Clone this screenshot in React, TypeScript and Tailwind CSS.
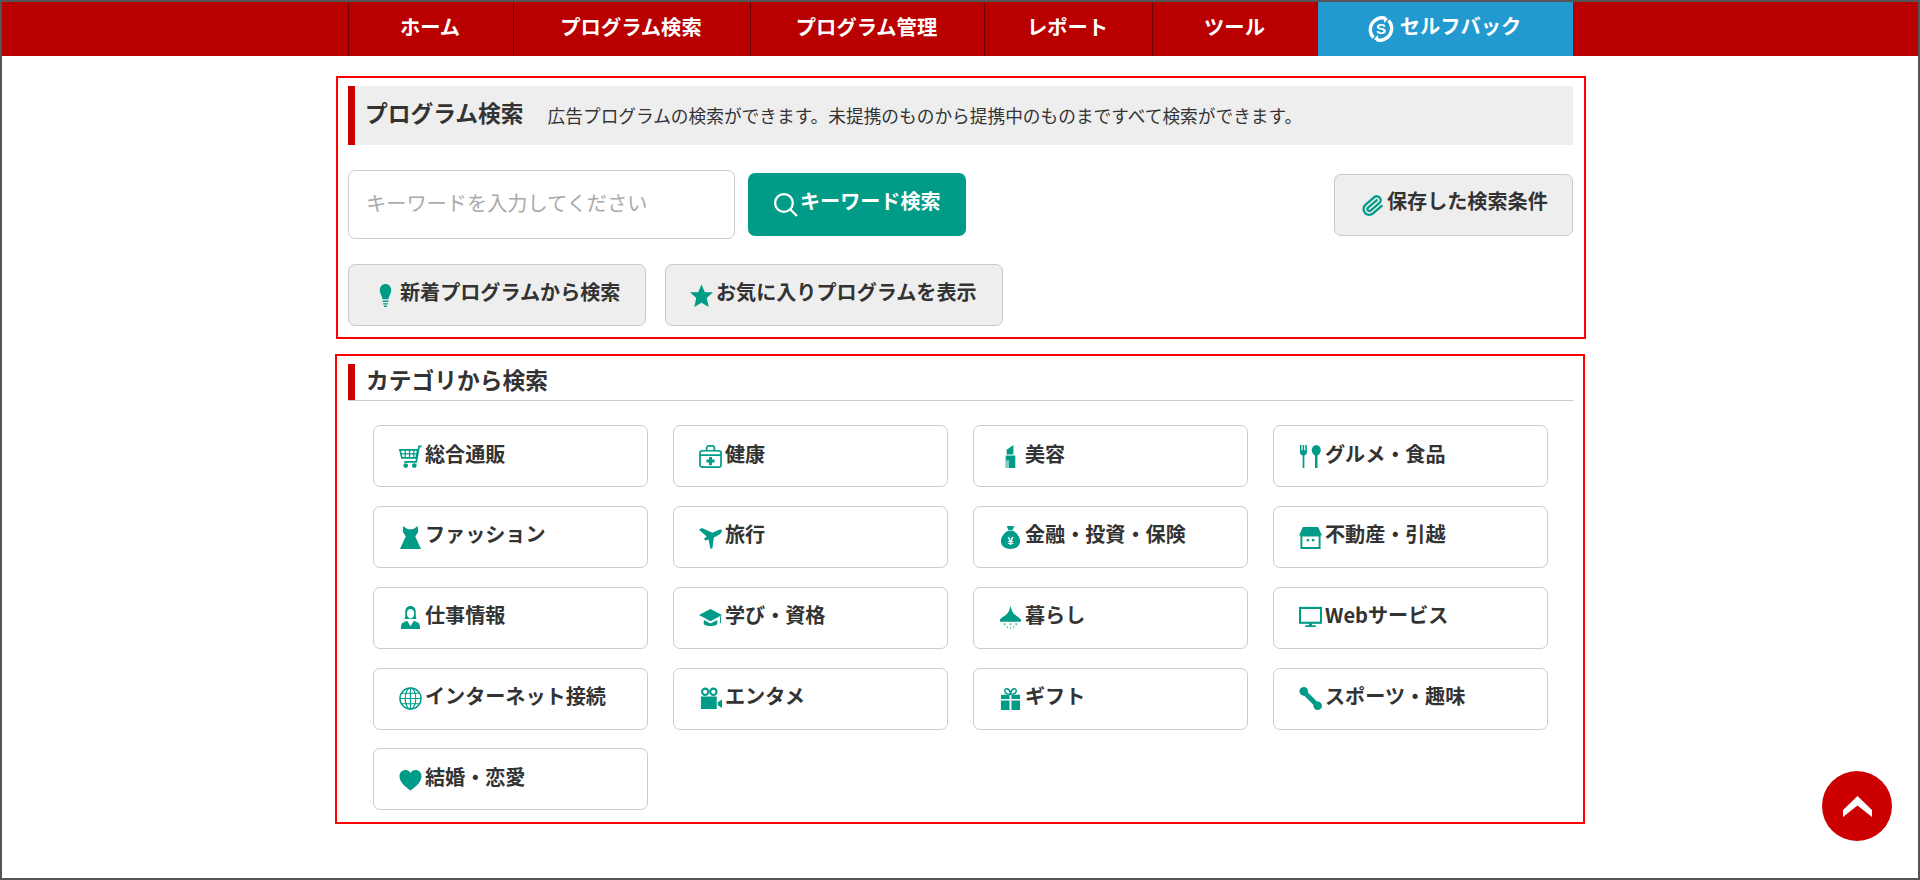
import type { ReactNode } from 'react';
import { Paperclip } from 'lucide-react';

const TEAL = '#009c88';

function Icon({ children }: { children: ReactNode }) {
  return (
    <svg viewBox="0 0 24 24" className="h-[23px] w-[23px] shrink-0" fill={TEAL}>
      {children}
    </svg>
  );
}

const line = { fill: 'none', stroke: TEAL, strokeWidth: 1.8 };

const icons: Record<string, ReactNode> = {
  cart: (
    <g {...line}>
      <path d="M23.5 1.5H21l-3 16H5.5" />
      <path d="M1 5h18.5L18 13.5H3z" />
      <path d="M6.5 5v8.5M11 5v8.5M15.5 5v8.5M2 9.2h17" strokeWidth="1.3" />
      <circle cx="7" cy="21.5" r="1.6" fill={TEAL} />
      <circle cx="16" cy="21.5" r="1.6" fill={TEAL} />
    </g>
  ),
  medical: (
    <g {...line}>
      <rect x="1" y="6" width="22" height="17" rx="2.5" />
      <path d="M8 6V3a2 2 0 0 1 2-2h4a2 2 0 0 1 2 2v3M1 10.5h22" />
      <path d="M10.5 12.5h3v2.7h2.7v3h-2.7V21h-3v-2.8H7.8v-3h2.7z" fill={TEAL} stroke="none" />
    </g>
  ),
  lipstick: (
    <>
      <path d="M8 10V5l7-5v10z" />
      <path d="M7 11h10v13H7z" />
      <path d="M7 16h3.500v8H7z" fill="#7fcdc3" />
    </>
  ),
  food: (
    <>
      <path d="M1 0h1.6v5.5h1.2V0h1.6v5.5h1.2V0h1.6v7.5c0 2-1.3 3-2.6 3.4V24H3.8V10.9C2.3 10.5 1 9.5 1 7.5z" />
      <ellipse cx="18" cy="5.5" rx="4.7" ry="5.5" />
      <path d="M16.7 9h2.6v15h-2.6z" />
    </>
  ),
  dress: <path d="M4.500 0L8 2.500q4 2 8 0L19.500 0l.5 6-3 5 6 13H1l6-13-3-5z" />,
  plane: <path d="M24 5q0-2-3-1l-7 3L3 2 0 4l8 7-3 2.500 2 1.500 3-1 2 10 2-1 1.500-11L21 9q3-2 3-4z" />,
  money: (
    <>
      <path d="M8 0h8l-2 4.5h-4z" />
      <path d="M9.5 5h5c4 2 7.5 6 7.5 11 0 5-4.5 8-10 8S2 21 2 16c0-5 3.500-9 7.500-11z" />
      <text x="12" y="20" textAnchor="middle" fontSize="11" fontWeight="700" fill="#fff" fontFamily="Liberation Sans, sans-serif">¥</text>
    </>
  ),
  shop: (
    <>
      <path d="M4 1h16l4 9H0z" />
      <path d="M2.500 10h19v13h-19z" fill="none" stroke={TEAL} strokeWidth="2" />
      <path d="M8 13.500h2.500V16H8zM13.500 13.500H16V16h-2.500z" />
    </>
  ),
  person: (
    <>
      <path d="M12 0C8.500 0 6.500 2.500 6.500 6c0 3 .3 5.500-.8 7.500h12.600c-1.100-2-.8-4.500-.8-7.500 0-3.500-2-6-5.500-6z" />
      <ellipse cx="12" cy="8" rx="3.800" ry="5" fill="#fff" />
      <path d="M8.500 15.500L4 17.500c-1.500.7-2 2.500-2 6.500h20c0-4-.5-5.800-2-6.500l-4.500-2L12 21z" />
    </>
  ),
  school: (
    <>
      <path d="M12 3L0 9.500l12 6.500 12-6.500z" />
      <path d="M5 14.500v4.500c2 2.500 12 2.500 14 0v-4.500l-7 3.800zM22 11l1-.5V18h-1z" />
    </>
  ),
  lamp: (
    <>
      <path d="M12 0l1.500 5C15 9 20 11 23 14v2.500H1V14c3-3 8-5 9.500-9z" />
      <path d="M5 18h2v2H5zM11 18h2v2h-2zM17 18h2v2h-2zM8 21h1.500v2H8zM14.500 21H16v2h-1.500zM11.500 22h1v2h-1z" fill="#66c4b8" />
    </>
  ),
  monitor: (
    <>
      <rect x="1" y="2" width="22" height="15.500" fill="none" stroke={TEAL} strokeWidth="2.200" />
      <path d="M10.500 17.500h3V20h-3zM6.500 20h11v2h-11z" />
    </>
  ),
  globe: (
    <g {...line} strokeWidth="1.200">
      <circle cx="12" cy="12" r="11" strokeWidth="1.500" />
      <ellipse cx="12" cy="12" rx="5.500" ry="11" />
      <path d="M12 1v22M1 12h22M2.500 6.500h19M2.500 17.500h19" />
    </g>
  ),
  video: (
    <>
      <circle cx="6.500" cy="5" r="3.300" fill="none" stroke={TEAL} strokeWidth="2.200" />
      <circle cx="15" cy="5" r="3.300" fill="none" stroke={TEAL} strokeWidth="2.200" />
      <path d="M2 10h16.500v13H2zM19.500 16l4.500-3v9l-4.500-3z" />
    </>
  ),
  gift: (
    <>
      <path d="M2 8h9v4.500H2zM13 8h9v4.500h-9zM2 14h9v10H2zM13 14h9v10h-9z" />
      <path d="M12 7.500C9 7.500 6 6.500 6 3.800 6 1 10.500.5 12 6.500c1.500-6 6-5.500 6-2.700 0 2.700-3 3.700-6 3.700z" fill="none" stroke={TEAL} strokeWidth="1.500" />
    </>
  ),
  sports: (
    <>
      <path d="M5.500 5.500l13 13" stroke={TEAL} strokeWidth="5" />
      <circle cx="5" cy="4.500" r="4.500" />
      <circle cx="19.500" cy="19.500" r="4.500" />
    </>
  ),
  heart: <path d="M12 23.500C6 19 .5 14.500.5 8.500.5 4.500 3.500 2 6.800 2 9 2 11 3.200 12 5.200 13 3.200 15 2 17.200 2c3.300 0 6.300 2.500 6.300 6.500 0 6-5.500 10.500-11.500 15z" />,
  bulb: (
    <>
      <path d="M12 0c3.500 0 6 2.800 6 6.500 0 3.500-2.500 6-3 9.500H9c-.5-3.500-3-6-3-9.500C6 2.800 8.500 0 12 0z" />
      <path d="M9 17.200h6v1.600H9zM9.500 20h5v1.500h-5zM10.500 22.500h3V24h-3z" />
    </>
  ),
  star: <path d="M12 .500l3.500 8h8.500l-6.500 6 2 9.500-7.500-4.500L4.500 24l2-9.500L0 8.500h8.500z" />,
};

const categories = [
  ['cart', '総合通販'],
  ['medical', '健康'],
  ['lipstick', '美容'],
  ['food', 'グルメ・食品'],
  ['dress', 'ファッション'],
  ['plane', '旅行'],
  ['money', '金融・投資・保険'],
  ['shop', '不動産・引越'],
  ['person', '仕事情報'],
  ['school', '学び・資格'],
  ['lamp', '暮らし'],
  ['monitor', 'Webサービス'],
  ['globe', 'インターネット接続'],
  ['video', 'エンタメ'],
  ['gift', 'ギフト'],
  ['sports', 'スポーツ・趣味'],
  ['heart', '結婚・恋愛'],
];

const navItems = [
  { label: 'ホーム', w: 'w-[165px]' },
  { label: 'プログラム検索', w: 'w-[237px]' },
  { label: 'プログラム管理', w: 'w-[234px]' },
  { label: 'レポート', w: 'w-[168px]' },
  { label: 'ツール', w: 'w-[166px]' },
];

function GrayButton({ icon, label, className, labelClass = 'pb-[5px]' }: { icon: ReactNode; label: string; className: string; labelClass?: string }) {
  return (
    <button className={`flex h-[62px] items-center gap-[3px] rounded-[7px] border border-[#c8c8c8] bg-[#eeeeee] text-[20.1px] font-bold leading-none text-[#333333] ${className}`}>
      {icon}
      <span className={labelClass}>{label}</span>
    </button>
  );
}

export default function App() {
  return (
    <div className="relative h-[880px] overflow-hidden border-2 border-[#555555] bg-white font-['Noto_Sans_CJK_JP','Noto_Sans',sans-serif] text-[#333333]">
      {/* header nav */}
      <nav className="flex h-[54px] bg-[#b90000] pl-[346px]">
        {navItems.map(item => (
          <a key={item.label} className={`flex items-center justify-center border-l border-[#6d0000] pb-[5px] pr-[2px] text-[20.3px] font-bold text-white ${item.w}`}>
            {item.label}
          </a>
        ))}
        <a className="flex w-[255px] items-center justify-center gap-[6px] bg-[#2299cf] pr-[2px] text-[20.3px] font-bold text-white">
          <svg viewBox="0 0 24 24" className="h-[26px] w-[26px]" fill="none" stroke="#fff" strokeWidth="3.200">
            <path d="M5 20a11 11 0 0 1 11-18" />
            <path d="M19 4a11 11 0 0 1-11 18" />
            <path d="M14 .5l4.500 2-3.500 4zM10 23.500l-4.500-2 3.500-4z" fill="#fff" stroke="none" />
            <text x="12" y="17" textAnchor="middle" fontSize="14" fontWeight="700" fill="#fff" stroke="none" fontFamily="Liberation Sans, sans-serif">S</text>
          </svg>
          <span className="pb-[7px]">セルフバック</span>
        </a>
      </nav>

      <main className="ml-[334px] w-[1250px] pt-[20px]">
        {/* keyword search */}
        <section className="border-2 border-[#ff0000] pb-[11px] pl-[10px] pr-[11px] pt-[8px]">
          <div className="flex h-[59px] items-center border-l-[7px] border-[#cc0000] bg-[#eeeeee] pl-[10px]">
            <h2 className="pb-[5px] text-[22.75px] font-bold leading-none">プログラム検索</h2>
            <p className="ml-[24px] text-[17.7px] leading-none">広告プログラムの検索ができます。未提携のものから提携中のものまですべて検索ができます。</p>
          </div>

          <div className="mt-[25px] flex items-start">
            <div className="flex h-[69px] w-[387px] items-center rounded-[7px] border border-[#cccccc] pb-[3px] pl-[17px] text-[20.2px] text-[#aaaaaa]">
              キーワードを入力してください
            </div>
            <button className="ml-[13px] mt-[3px] flex h-[63px] w-[218px] items-center gap-[2px] rounded-[7px] bg-[#009c88] pl-[25px] text-[20.1px] font-bold leading-none text-white">
              <svg viewBox="0 0 24 24" className="h-[25px] w-[25px]" fill="none" stroke="#fff" strokeWidth="2.200">
                <circle cx="10.500" cy="10.500" r="8.500" />
                <path d="M16.500 16.500L23 23" />
              </svg>
              <span className="pb-[6px]">キーワード検索</span>
            </button>
            <GrayButton
              className="ml-auto mt-[4px] w-[239px] pl-[26px]"
              labelClass="pb-[7px]"
              icon={<Paperclip className="h-[23px] w-[23px] rotate-[5deg]" color={TEAL} strokeWidth={2.4} />}
              label="保存した検索条件"
            />
          </div>

          <div className="mt-[25px] flex gap-[19px]">
            <GrayButton className="w-[298px] pl-[25px]" icon={<Icon>{icons.bulb}</Icon>} label="新着プログラムから検索" />
            <GrayButton className="w-[338px] pl-[24px]" icon={<Icon>{icons.star}</Icon>} label="お気に入りプログラムを表示" />
          </div>
        </section>

        {/* categories */}
        <section className="-ml-px mt-[15px] w-[1250px] border-2 border-[#ff0000] pb-[11.25px] pl-[11px] pr-[10px] pt-[8px]">
          <div className="flex h-[36.5px] items-center border-b border-[#cccccc]">
            <span className="h-full w-[7px] bg-[#cc0000]" />
            <h2 className="ml-[11px] pb-[3px] text-[22.75px] font-bold leading-none">カテゴリから検索</h2>
          </div>
          <div className="mt-[24.75px] grid grid-cols-[repeat(4,275px)] gap-x-[25px] gap-y-[18.75px] pl-[25px]">
            {categories.map(([icon, label]) => (
              <a key={label} className="flex h-[62px] items-center gap-[3px] rounded-[7px] border border-[#cccccc] bg-white pl-[25px] text-[20.1px] font-bold leading-none">
                <Icon>{icons[icon]}</Icon>
                <span className="pb-[5px]">{label}</span>
              </a>
            ))}
          </div>
        </section>
      </main>

      {/* back to top */}
      <a className="absolute bottom-[37px] right-[26px] flex h-[70px] w-[70px] items-center justify-center rounded-full bg-[#cc0000]">
        <svg viewBox="0 0 29 21" className="h-[21px] w-[29px]" fill="#fff">
          <polygon points="14.500,0 29,14 29,21 14.500,9.500 0,21 0,14" />
        </svg>
      </a>
    </div>
  );
}
